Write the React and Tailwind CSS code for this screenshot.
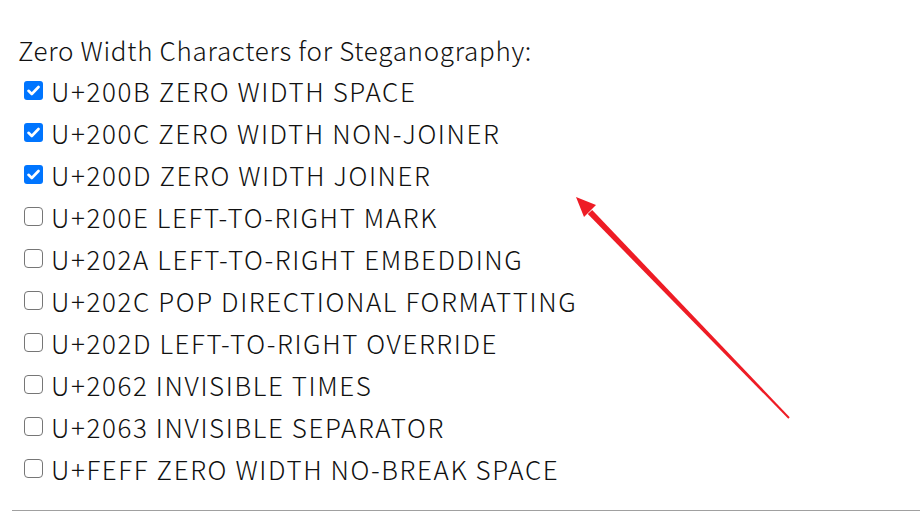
import React from 'react'

const items = [
  { code: 'U+200B', name: 'ZERO WIDTH SPACE', checked: true },
  { code: 'U+200C', name: 'ZERO WIDTH NON-JOINER', checked: true },
  { code: 'U+200D', name: 'ZERO WIDTH JOINER', checked: true },
  { code: 'U+200E', name: 'LEFT-TO-RIGHT MARK', checked: false },
  { code: 'U+202A', name: 'LEFT-TO-RIGHT EMBEDDING', checked: false },
  { code: 'U+202C', name: 'POP DIRECTIONAL FORMATTING', checked: false },
  { code: 'U+202D', name: 'LEFT-TO-RIGHT OVERRIDE', checked: false },
  { code: 'U+2062', name: 'INVISIBLE TIMES', checked: false },
  { code: 'U+2063', name: 'INVISIBLE SEPARATOR', checked: false },
  { code: 'U+FEFF', name: 'ZERO WIDTH NO-BREAK SPACE', checked: false }
]

const Box = ({ checked }) =>
  checked ? (
    <span className="w-[19px] h-[19px] rounded-[3px] bg-[#0075ff] flex items-center justify-center shrink-0">
      <svg width="13" height="11" viewBox="0 0 13 11">
        <path d="M1.5 5.8 L4.8 9 L11.5 2" fill="none" stroke="white" strokeWidth="2.6" strokeLinecap="round" strokeLinejoin="round" />
      </svg>
    </span>
  ) : (
    <span className="w-[19px] h-[19px] rounded-[4px] border-[1.5px] border-[#767676] bg-white shrink-0" />
  )

const App = () => {
  return (
    <div
      className="relative w-[920px] h-[517px] overflow-hidden bg-white text-[#111] font-light"
      style={{ fontFamily: '"Noto Sans CJK JP", "Noto Sans", sans-serif' }}
    >
      <div className="pt-[30px] pl-[18px]">
        <div className="text-[26px] leading-[40px] h-[39px] tracking-[0.7px]">Zero Width Characters for Steganography:</div>
        <div className="flex flex-col">
          {items.map((el) => (
            <label key={el.code} className="flex items-center h-[42px] pl-[6px] gap-[8px] text-[26px]">
              <Box checked={el.checked} />
              <span className="tracking-[1.6px]">
                {el.code} {el.name}
              </span>
            </label>
          ))}
        </div>
      </div>
      <div className="absolute left-[12px] right-0 top-[510px] border-t border-[#a0a0a0]"></div>
      <svg className="absolute left-0 top-0" width="920" height="517">
        <path d="M789.7 417.3 L592.2 209.9 L587.8 214.1 L788.3 418.7 Z" fill="#ee1c25" />
        <path d="M576 197 L596 205 L584 217 Z" fill="#ee1c25" />
      </svg>
    </div>
  )
}

export default App
